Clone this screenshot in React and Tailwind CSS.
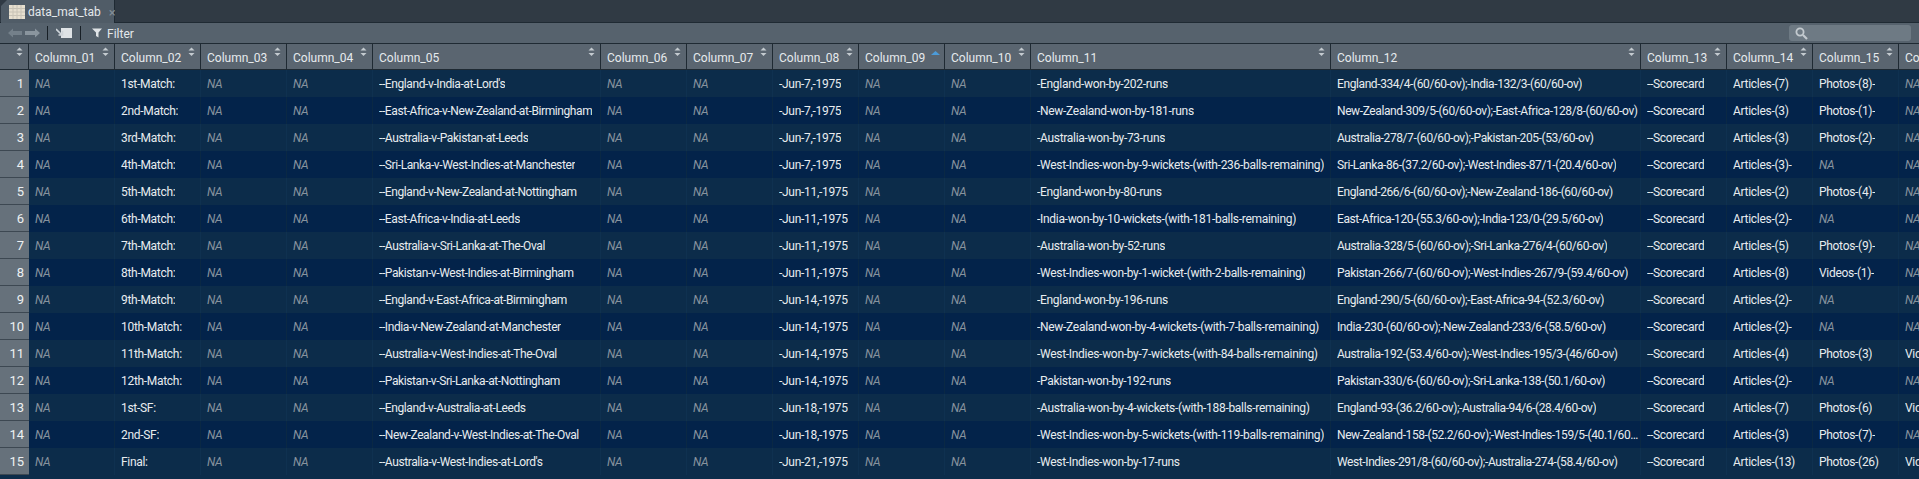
import React from 'react';

const widths = [86, 86, 86, 86, 228, 86, 86, 86, 86, 86, 300, 310, 86, 86, 86, 86];

const rows = [
  ['1st-Match:', "--England-v-India-at-Lord's", '-Jun-7,-1975', '-England-won-by-202-runs', 'England-334/4-(60/60-ov);-India-132/3-(60/60-ov)', 'Articles-(7)', 'Photos-(8)-', null],
  ['2nd-Match:', '--East-Africa-v-New-Zealand-at-Birmingham', '-Jun-7,-1975', '-New-Zealand-won-by-181-runs', 'New-Zealand-309/5-(60/60-ov);-East-Africa-128/8-(60/60-ov)', 'Articles-(3)', 'Photos-(1)-', null],
  ['3rd-Match:', '--Australia-v-Pakistan-at-Leeds', '-Jun-7,-1975', '-Australia-won-by-73-runs', 'Australia-278/7-(60/60-ov);-Pakistan-205-(53/60-ov)', 'Articles-(3)', 'Photos-(2)-', null],
  ['4th-Match:', '--Sri-Lanka-v-West-Indies-at-Manchester', '-Jun-7,-1975', '-West-Indies-won-by-9-wickets-(with-236-balls-remaining)', 'Sri-Lanka-86-(37.2/60-ov);-West-Indies-87/1-(20.4/60-ov)', 'Articles-(3)-', null, null],
  ['5th-Match:', '--England-v-New-Zealand-at-Nottingham', '-Jun-11,-1975', '-England-won-by-80-runs', 'England-266/6-(60/60-ov);-New-Zealand-186-(60/60-ov)', 'Articles-(2)', 'Photos-(4)-', null],
  ['6th-Match:', '--East-Africa-v-India-at-Leeds', '-Jun-11,-1975', '-India-won-by-10-wickets-(with-181-balls-remaining)', 'East-Africa-120-(55.3/60-ov);-India-123/0-(29.5/60-ov)', 'Articles-(2)-', null, null],
  ['7th-Match:', '--Australia-v-Sri-Lanka-at-The-Oval', '-Jun-11,-1975', '-Australia-won-by-52-runs', 'Australia-328/5-(60/60-ov);-Sri-Lanka-276/4-(60/60-ov)', 'Articles-(5)', 'Photos-(9)-', null],
  ['8th-Match:', '--Pakistan-v-West-Indies-at-Birmingham', '-Jun-11,-1975', '-West-Indies-won-by-1-wicket-(with-2-balls-remaining)', 'Pakistan-266/7-(60/60-ov);-West-Indies-267/9-(59.4/60-ov)', 'Articles-(8)', 'Videos-(1)-', null],
  ['9th-Match:', '--England-v-East-Africa-at-Birmingham', '-Jun-14,-1975', '-England-won-by-196-runs', 'England-290/5-(60/60-ov);-East-Africa-94-(52.3/60-ov)', 'Articles-(2)-', null, null],
  ['10th-Match:', '--India-v-New-Zealand-at-Manchester', '-Jun-14,-1975', '-New-Zealand-won-by-4-wickets-(with-7-balls-remaining)', 'India-230-(60/60-ov);-New-Zealand-233/6-(58.5/60-ov)', 'Articles-(2)-', null, null],
  ['11th-Match:', '--Australia-v-West-Indies-at-The-Oval', '-Jun-14,-1975', '-West-Indies-won-by-7-wickets-(with-84-balls-remaining)', 'Australia-192-(53.4/60-ov);-West-Indies-195/3-(46/60-ov)', 'Articles-(4)', 'Photos-(3)', 'Videos-(1)'],
  ['12th-Match:', '--Pakistan-v-Sri-Lanka-at-Nottingham', '-Jun-14,-1975', '-Pakistan-won-by-192-runs', 'Pakistan-330/6-(60/60-ov);-Sri-Lanka-138-(50.1/60-ov)', 'Articles-(2)-', null, null],
  ['1st-SF:', '--England-v-Australia-at-Leeds', '-Jun-18,-1975', '-Australia-won-by-4-wickets-(with-188-balls-remaining)', 'England-93-(36.2/60-ov);-Australia-94/6-(28.4/60-ov)', 'Articles-(7)', 'Photos-(6)', 'Videos-(1)'],
  ['2nd-SF:', '--New-Zealand-v-West-Indies-at-The-Oval', '-Jun-18,-1975', '-West-Indies-won-by-5-wickets-(with-119-balls-remaining)', 'New-Zealand-158-(52.2/60-ov);-West-Indies-159/5-(40.1/60-ov)', 'Articles-(3)', 'Photos-(7)-', null],
  ['Final:', "--Australia-v-West-Indies-at-Lord's", '-Jun-21,-1975', '-West-Indies-won-by-17-runs', 'West-Indies-291/8-(60/60-ov);-Australia-274-(58.4/60-ov)', 'Articles-(13)', 'Photos-(26)', 'Videos-(1)'],
];

const toCells = (r) => [null, r[0], null, null, r[1], null, null, r[2], null, null, r[3], r[4], '--Scorecard', r[5], r[6], r[7]];

const SortIcon = ({ active }) =>
  active ? (
    <svg width="9" height="4" viewBox="0 0 9 4" className="absolute right-[4px] top-[7px]">
      <path d="M0 4 L4.5 0 L9 4 Z" fill="#4c9bd8" />
    </svg>
  ) : (
    <svg width="7" height="10" viewBox="0 0 7 10" className="absolute right-[5px] top-[3px]">
      <path d="M0.5 3.5 L3.5 0.5 L6.5 3.5 Z" fill="#c4cbd0" />
      <path d="M0.5 6 L3.5 9 L6.5 6 Z" fill="#c4cbd0" />
    </svg>
  );

const Cell = ({ value, width, alt, tight }) => (
  <div
    style={{ width }}
    className={`shrink-0 h-full flex items-center pl-[6px] pr-[1px] pt-[1px] border-r ${tight ? 'tracking-[-0.4px]' : 'tracking-[-0.3px]'} ${alt ? 'border-[#0a2844]' : 'border-[#0f3150]'}`}
  >
    {value ? (
      <span className="truncate text-[#e8ecef]">{value}</span>
    ) : (
      <span className="italic text-[#87939e]">NA</span>
    )}
  </div>
);

export default function App() {
  return (
    <div className="w-[1919px] h-[479px] overflow-hidden bg-[#0c2c4a] text-[12px] font-['Roboto',sans-serif]">
      {/* Tabs */}
      <div className="h-[23px] bg-[#303a44] border-b border-[#1f2a33] flex">
        <div className="w-[114px] ml-[1px] h-[23px] bg-[#505c67] border-r border-[#1f2a33] flex items-center pl-[8px] pt-[1px] [clip-path:polygon(6px_0,100%_0,100%_100%,0_100%,0_6px)]">
          <svg width="16" height="14" viewBox="0 0 16 14" className="shrink-0">
            <rect width="16" height="14" fill="#e6dfcf" />
            <path d="M0 3.5H16M0 7H16M0 10.5H16M4 0V14M8 0V14M12 0V14" stroke="#c8c3b6" strokeWidth="1" />
          </svg>
          <span className="ml-[3px] text-[#e4e8eb]">data_mat_tab</span>
          <span className="ml-[8px] text-[#838e97] text-[13px] leading-none">×</span>
        </div>
      </div>

      {/* Toolbar */}
      <div className="h-[21px] bg-[#56626d] border-b border-[#1f2a33] flex items-center">
        <svg width="32" height="10" viewBox="0 0 32 10" className="ml-[8px]">
          <path d="M0 5 L5 0.5 V3 H14 V7 H5 V9.5 Z" fill="#74808a" />
          <path d="M32 5 L27 0.5 V3 H17 V7 H27 V9.5 Z" fill="#8a959e" />
        </svg>
        <div className="w-px h-[14px] bg-[#171f26] ml-[7px]" />
        <svg width="16" height="12" viewBox="0 0 16 12" className="ml-[8px]">
          <rect x="5" y="1" width="11" height="10" fill="#dfe3e6" />
          <path d="M0 2 L6 8 M2.5 8 H6.5 V4" stroke="#cfd5da" strokeWidth="1.6" fill="none" />
        </svg>
        <div className="w-px h-[14px] bg-[#171f26] ml-[8px]" />
        <svg width="11" height="10" viewBox="0 0 11 10" className="ml-[11px]">
          <path d="M0 0.5 H10 L6.5 4.5 V9.5 L4 8 V4.5 Z" fill="#dfe3e6" />
        </svg>
        <span className="ml-[4px] pt-[1px] text-[#e4e8eb]">Filter</span>
        <div className="ml-auto mr-[8px] w-[122px] h-[16px] rounded-[3px] bg-[#6e7a84] flex items-center pl-[6px]">
          <svg width="13" height="13" viewBox="0 0 13 13">
            <circle cx="5" cy="5" r="3.6" stroke="#c3cacf" strokeWidth="1.8" fill="none" />
            <path d="M8 8 L12 12" stroke="#c3cacf" strokeWidth="2.2" />
          </svg>
        </div>
      </div>

      {/* Header */}
      <div className="h-[26px] flex bg-[#5a6570] border-b border-[#1f2a33]">
        <div className="relative w-[29px] shrink-0 border-r border-[#1f2a33]">
          <SortIcon />
        </div>
        {widths.map((w, i) => (
          <div
            key={i}
            style={{ width: w }}
            className="relative shrink-0 flex items-center pl-[6px] pt-[2px] text-[#e6eaed] border-r border-[#1f2a33]"
          >
            Column_{String(i + 1).padStart(2, '0')}
            <SortIcon active={i === 8} />
          </div>
        ))}
      </div>

      {/* Rows */}
      {rows.map((r, n) => {
        const alt = n % 2 === 1;
        return (
          <div key={n} className={`h-[27px] flex ${alt ? 'bg-[#03234a]' : 'bg-[#0c2c4a]'}`}>
            <div className="w-[29px] shrink-0 h-full flex items-center justify-end pr-[5px] pt-[1px] bg-[#66717b] text-[#eef1f3] border-b border-[#3d4852] text-[13px]">
              {n + 1}
            </div>
            {toCells(r).map((v, i) => (
              <Cell key={i} value={v} width={widths[i]} alt={alt} tight={i === 4 || i === 11} />
            ))}
          </div>
        );
      })}
    </div>
  );
}
